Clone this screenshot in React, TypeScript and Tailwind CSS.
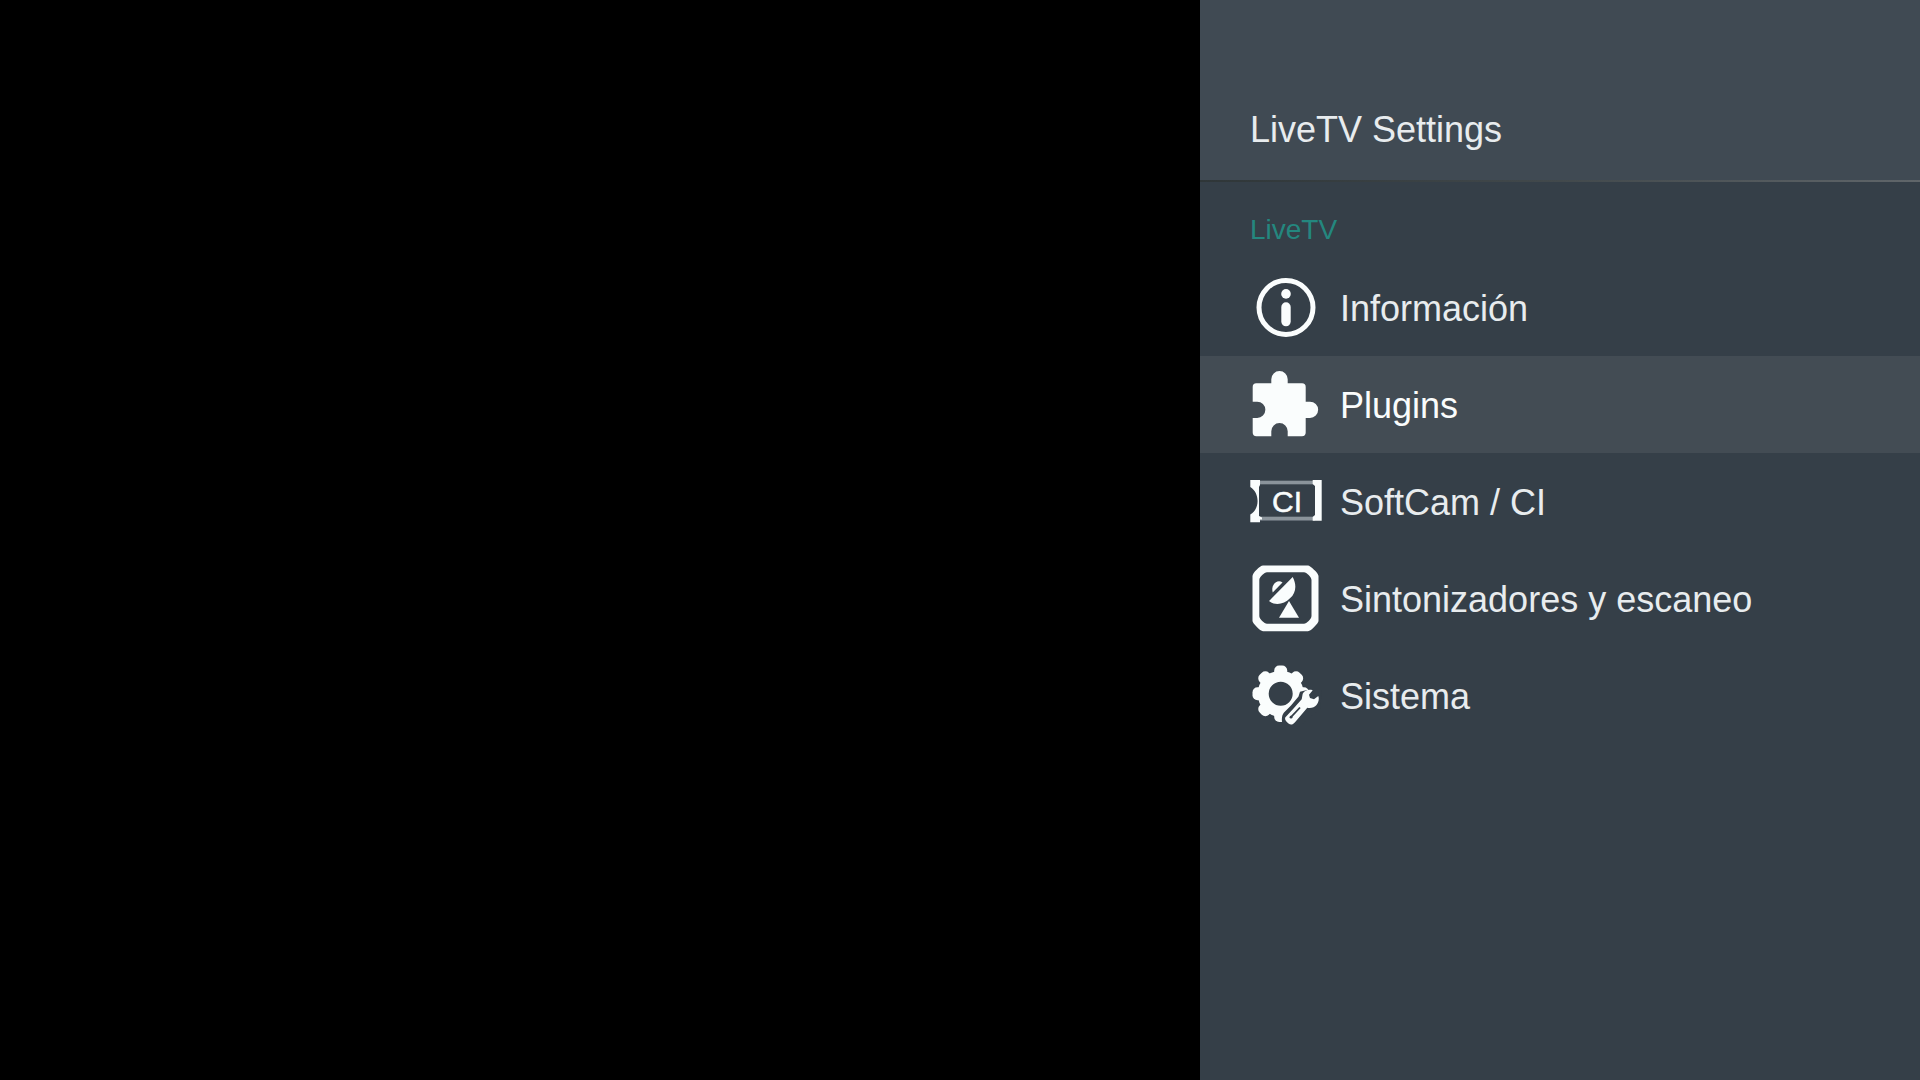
import React from "react";

function InfoIcon() {
  return (
    <svg className="w-[73px] h-[73px] shrink-0" viewBox="0 0 73 73" fill="#fafdfd" aria-hidden="true">
      <circle cx="36" cy="36.5" r="27" fill="none" stroke="#fafdfd" strokeWidth="5" />
      <circle cx="36" cy="22.9" r="4.8" />
      <rect x="31.3" y="31.3" width="9.4" height="24" rx="4.7" />
    </svg>
  );
}

function PuzzleIcon() {
  return (
    <svg className="w-[73px] h-[73px] shrink-0" viewBox="0 0 73 73" fill="#fafdfd" aria-hidden="true">
      <path d="M6.5 15.3H21.3V11.2a8.2 8.2 0 0 1 16.4 0V15.3H52a3.7 3.7 0 0 1 3.7 3.7V33.7H60a8.1 8.1 0 0 1 0 16.3H55.7V64.6a3.7 3.7 0 0 1-3.7 3.7H37.7V63.2a8.2 8.2 0 0 0-16.4 0V68.3H6.4a3.7 3.7 0 0 1-3.7-3.7V50H7.2a8.1 8.1 0 0 0 0-16.3H2.7V19a3.7 3.7 0 0 1 3.8-3.7Z" />
    </svg>
  );
}

function CardIcon() {
  return (
    <svg className="w-[73px] h-[73px] shrink-0" viewBox="0 0 73 73" fill="#fafdfd" aria-hidden="true">
      <rect x="9" y="15.7" width="56" height="3.6" fill="#8b949b" />
      <rect x="9" y="51.7" width="56" height="3.8" fill="#8b949b" />
      <path d="M0.3 15H10V20L9 22V51L12 52.5V54.5H10V57.3H0.3V49.5C10 44 10 28 0.3 22Z" />
      <path d="M62.7 15H71.7V55.7H62.7V52L65 50V21L62.7 19Z" />
      <text
        x="37"
        y="47"
        textAnchor="middle"
        className="font-['Liberation_Sans',sans-serif] text-[30px]"
        stroke="#fafdfd"
        strokeWidth="0.5"
      >
        CI
      </text>
    </svg>
  );
}

function DishIcon() {
  return (
    <svg className="w-[73px] h-[73px] shrink-0" viewBox="0 0 73 73" fill="#fafdfd" aria-hidden="true">
      <path
        fillRule="evenodd"
        d="M13 3.5H58C60 3.5 68.5 11 68.5 14V59C68.5 61 61 69.2 58 69.2H13C10 69.2 2.5 61 2.5 59V14C2.5 11 10 3.5 13 3.5ZM17 10.3C14.5 10.3 9.3 15 9.3 18V54C9.3 57 14.5 61.8 17 61.8H54C56.5 61.8 61.5 57 61.5 54V18C61.5 15 56.5 10.3 54 10.3Z"
      />
      <path d="M42.7 15C47 23 46 31 40 36.3C34 42.5 25 44 19 39Z" />
      <path d="M22.7 30.5C20.5 23 27 16.5 32.5 20.5Z" />
      <path d="M39 39L29 55.8H49Z" />
    </svg>
  );
}

function SystemIcon() {
  const teeth = [0, 45, 90, 135, 180, 225, 270, 315];
  return (
    <svg className="w-[73px] h-[73px] shrink-0" viewBox="0 0 73 73" fill="#fafdfd" aria-hidden="true">
      <circle cx="30.7" cy="34.7" r="17.5" fill="none" stroke="#fafdfd" strokeWidth="11" />
      {teeth.map((angle) => (
        <rect
          key={angle}
          x="24.2"
          y="6.5"
          width="13"
          height="13"
          rx="5"
          transform={`rotate(${angle} 30.7 34.7)`}
        />
      ))}
      <path
        d="M57 31L72 31L70 50L46 70H33.5C31.5 63 31 57 34 53.5L41 46.5L48.5 37.5L50 32.8Z"
        fill="#353f48"
      />
      <path d="M35.2 58.5L43.3 49.7L51.7 40.3L52.7 34.7C54.5 31.5 58.5 30 62.7 31.3L59 35.7L60 39L64 40.3L68.3 37C69.5 40 68.5 43.5 66.5 46C64.5 48.5 61 49.3 57.3 48.7L45 63.3C42.5 66.2 40.5 66 38.5 64.5C36 62.7 34.5 60.5 35.2 58.5Z" />
      <path d="M41 58.2L50 48.5" stroke="#353f48" strokeWidth="1.8" />
      <circle cx="41" cy="58.2" r="1.4" fill="#353f48" />
    </svg>
  );
}

const items = [
  { label: "Información", icon: <InfoIcon /> },
  { label: "Plugins", icon: <PuzzleIcon />, active: true },
  { label: "SoftCam / CI", icon: <CardIcon /> },
  { label: "Sintonizadores y escaneo", icon: <DishIcon /> },
  { label: "Sistema", icon: <SystemIcon /> },
];

export default function App() {
  return (
    <main className="flex min-h-screen justify-end bg-black font-['Liberation_Sans',sans-serif]">
      <aside className="w-3/8 bg-[#353f48] text-[#e8ecee]">
        <header className="bg-[#404a53] pt-[118px] pb-[38px] pl-[50px]">
          <h1 className="text-[36px] leading-6">LiveTV Settings</h1>
        </header>
        <div className="h-[2px] bg-linear-to-r from-[#2f3638] via-[#42494c] to-[#60666a]" />
        <h2 className="pt-[28px] pb-[9px] pl-[50px] text-[28px] leading-10 text-[#24877f]">LiveTV</h2>
        <nav className="flex flex-col">
          {items.map((item) => (
            <button
              key={item.label}
              className={`flex h-[97px] items-center gap-[17px] pl-[50px] text-left text-[36px] ${
                item.active ? "bg-[#434c54] text-[#fafcfc]" : ""
              }`}
            >
              {item.icon}
              <span className="pt-0.5">{item.label}</span>
            </button>
          ))}
        </nav>
      </aside>
    </main>
  );
}
